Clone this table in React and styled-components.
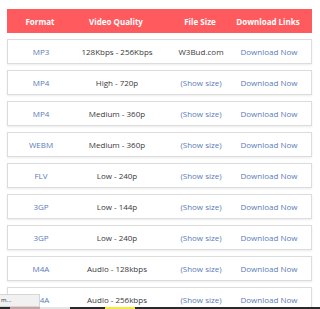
import styled, { createGlobalStyle } from "styled-components"

const GlobalStyle = createGlobalStyle`
  html, body {
    margin: 0;
    padding: 0;
    background: #fff;
    overflow: hidden;
  }
  body {
    font-family: "Open Sans", "Liberation Sans", sans-serif;
  }
`

const formats = [
    { format: "MP3", quality: "128Kbps - 256Kbps", size: "W3Bud.com", plain: true },
    { format: "MP4", quality: "High - 720p", size: "(Show size)" },
    { format: "MP4", quality: "Medium - 360p", size: "(Show size)" },
    { format: "WEBM", quality: "Medium - 360p", size: "(Show size)" },
    { format: "FLV", quality: "Low - 240p", size: "(Show size)" },
    { format: "3GP", quality: "Low - 144p", size: "(Show size)" },
    { format: "3GP", quality: "Low - 240p", size: "(Show size)" },
    { format: "M4A", quality: "Audio - 128kbps", size: "(Show size)" },
    { format: "M4A", quality: "Audio - 256kbps", size: "(Show size)" },
]

const App = () => {
    return (
        <Page>
            <GlobalStyle />
            <Table>
                <Header>
                    <HeadCell>Format</HeadCell>
                    <HeadCell>Video Quality</HeadCell>
                    <HeadCell>File Size</HeadCell>
                    <HeadCell>Download Links</HeadCell>
                </Header>
                {formats.map((row, i) => (
                    <Row key={i}>
                        <Cell $link>{row.format}</Cell>
                        <Cell>{row.quality}</Cell>
                        <Cell $link={!row.plain}>{row.size}</Cell>
                        <Cell $link>Download Now</Cell>
                    </Row>
                ))}
            </Table>
            <StatusTip>m...</StatusTip>
            <Taskbar>
                <TaskItem $w={10} $c="#2a2a2a" />
                <TaskItem $w={30} $c="#c7a3a3" />
                <TaskItem $w={30} $c="#e4e4e4" />
                <TaskItem $w={35} $c="#2a2a2a" />
                <TaskItem $w={30} $c="#f2ea3c" />
                <TaskItem $w={185} $c="#2a2a2a" />
            </Taskbar>
        </Page>
    )
}

const Page = styled.div`
    position: relative;
    width: 320px;
    height: 309px;
    padding: 9px 8px 0 7px;
    box-sizing: border-box;
    overflow: hidden;
`

const Table = styled.div`
    display: flex;
    flex-direction: column;
    gap: 6px;
`

const columns = `
    display: grid;
    grid-template-columns: 66px 86px 82px 54px;
    padding-right: 17px;
    align-items: center;
`

const Header = styled.div`
    ${columns}
    height: 24px;
    background-color: #ff5b5f;
`

const HeadCell = styled.div`
    display: flex;
    justify-content: center;
    white-space: nowrap;
    color: #fff;
    font-weight: 700;
    font-size: 8px;
`

const Row = styled.div`
    ${columns}
    height: 25px;
    border: 1px solid #dcdcdc;
    box-shadow: 0 1px 2px rgba(0, 0, 0, 0.08);
    box-sizing: border-box;
    background: #fff;
`

const Cell = styled.div`
    display: flex;
    justify-content: center;
    white-space: nowrap;
    font-size: 8px;
    color: ${p => (p.$link ? "#5a7cb8" : "#3a3a3a")};
`

const StatusTip = styled.div`
    position: absolute;
    left: 0;
    bottom: 2px;
    width: 38px;
    height: 11px;
    padding-left: 1px;
    background: #f1f1f1;
    border: 1px solid #d6d6d6;
    border-left: 0;
    font-size: 6px;
    line-height: 11px;
    color: #333;
`

const Taskbar = styled.div`
    position: absolute;
    left: 0;
    right: 0;
    bottom: 0;
    height: 2px;
    display: flex;
    background: #2a2a2a;
`

const TaskItem = styled.div`
    width: ${p => p.$w}px;
    background: ${p => p.$c};
`

export default App
